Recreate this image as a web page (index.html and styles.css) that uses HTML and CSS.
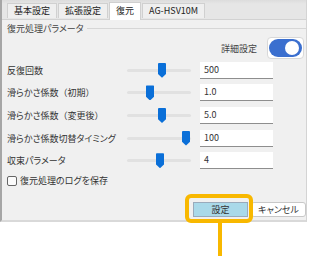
FILE: index.html
```html
<!DOCTYPE html>
<html lang="ja">
<head>
  <meta charset="UTF-8" />
  <title>復元処理パラメータ</title>
  <link rel="stylesheet" href="styles.css">
</head>
<body>
  <div class="window">
    <div class="tabs">
      <div class="tab">基本設定</div>
      <div class="tab">拡張設定</div>
      <div class="tab active">復元</div>
      <div class="tab">AG-HSV10M</div>
    </div>
    <div class="page">
      <div class="group-head">
        <span class="group-title">復元処理パラメータ</span>
        <span class="group-line"></span>
      </div>
      <div class="detail-row">
        <span class="detail-label">詳細設定</span>
        <span class="toggle"><span class="knob"></span></span>
      </div>
      <div class="param-row">
        <span class="label">反復回数</span>
        <span class="slider"><span class="thumb" style="left: 31px"></span></span>
        <span class="field">500</span>
      </div>
      <div class="param-row">
        <span class="label">滑らかさ係数<span class="paren">（</span>初期<span class="paren">）</span></span>
        <span class="slider"><span class="thumb" style="left: 19px"></span></span>
        <span class="field">1.0</span>
      </div>
      <div class="param-row">
        <span class="label">滑らかさ係数<span class="paren">（</span>変更後<span class="paren">）</span></span>
        <span class="slider"><span class="thumb" style="left: 31px"></span></span>
        <span class="field">5.0</span>
      </div>
      <div class="param-row">
        <span class="label">滑らかさ係数切替タイミング</span>
        <span class="slider"><span class="thumb" style="left: 55px"></span></span>
        <span class="field">100</span>
      </div>
      <div class="param-row">
        <span class="label">収束パラメータ</span>
        <span class="slider"><span class="thumb" style="left: 29px"></span></span>
        <span class="field">4</span>
      </div>
      <label class="check-row">
        <span class="checkbox"></span>
        <span>復元処理のログを保存</span>
      </label>
      <div class="buttons">
        <button class="btn primary">設定</button>
        <button class="btn">キャンセル</button>
      </div>
    </div>
  </div>
  <div class="highlight"></div>
  <div class="pointer"></div>
</body>
</html>
```

FILE: styles.css
```css
body {
  margin: 0;
  background: #fff;
  font-family: "Noto Sans CJK JP", "Noto Sans", sans-serif;
  font-feature-settings: "palt";
  font-size: 9px;
  color: #333;
  width: 313px;
  height: 256px;
  position: relative;
  overflow: hidden;
}
.window {
  width: 304px;
  height: 220px;
  background: #f0f0f0;
  border-left: 2px solid #a6a6a6;
  border-right: 1px solid #d4d4d4;
  border-bottom: 2px solid #d9d9d9;
}
.tabs {
  height: 19px;
  display: flex;
  align-items: flex-end;
  padding-left: 5px;
  background: linear-gradient(#dcdcdc 0, #e6e6e6 4px);
  border-bottom: 1px solid #d2d2d2;
}
.tab {
  height: 14px;
  line-height: 14px;
  padding: 0 6px;
  margin-right: 1px;
  margin-bottom: 1px;
  background: #efefef;
  border: 1px solid #d0d0d0;
  border-bottom: none;
  color: #222;
}
.tab.active {
  height: 17px;
  line-height: 16px;
  margin-bottom: -1px;
  background: #fff;
}
.page {
  padding: 0 0 0 5px;
}
.group-head {
  display: flex;
  align-items: center;
  height: 12px;
  margin-top: 2px;
}
.group-title {
  color: #444;
  padding-right: 3px;
}
.group-line {
  flex: 1;
  height: 1px;
  background: #d6d6d6;
}
.detail-row {
  display: flex;
  justify-content: flex-end;
  align-items: center;
  gap: 10px;
  height: 22px;
  margin-top: 3px;
  padding-right: 2px;
}
.detail-label {
  color: #444;
}
.toggle {
  width: 33px;
  height: 18px;
  border: 1px solid #d8d8d8;
  border-radius: 4px;
  background: #fff;
  padding: 1px;
  display: flex;
  justify-content: flex-end;
  align-items: center;
  box-sizing: content-box;
  position: relative;
}
.toggle::before {
  content: "";
  position: absolute;
  inset: 1px;
  border-radius: 9px;
  background: #3b6fcf;
}
.knob {
  position: relative;
  width: 14px;
  height: 14px;
  margin-right: 3px;
  border-radius: 50%;
  background: #fff;
}
.param-row {
  display: grid;
  grid-template-columns: 120px 64px 82px;
  align-items: center;
  height: 22.6px;
}
.label {
  color: #333;
  white-space: nowrap;
}
.paren {
  font-feature-settings: normal;
}
.slider {
  position: relative;
  height: 3px;
  border-radius: 2px;
  background: #e1e1e1;
}
.thumb {
  position: absolute;
  top: -6px;
  width: 8px;
  height: 15px;
  background: #0a6fd8;
  clip-path: polygon(0 0, 100% 0, 100% 75%, 50% 100%, 0 75%);
  border-radius: 1px;
}
.field {
  margin-left: 9px;
  height: 16px;
  line-height: 16px;
  padding-left: 4px;
  background: #fff;
  border-bottom: 1px solid #8e8e8e;
  color: #333;
}
.check-row {
  display: flex;
  align-items: center;
  gap: 3px;
  height: 18px;
}
.checkbox {
  width: 8px;
  height: 8px;
  border: 1px solid #666;
  border-radius: 2px;
  background: #fbfbfb;
}
.buttons {
  display: flex;
  justify-content: flex-end;
  gap: 3px;
  margin-top: 12px;
}
.btn {
  width: 55px;
  height: 15px;
  padding: 0;
  font: inherit;
  color: #333;
  background: #fff;
  border: 1px solid #c8c8c8;
  border-radius: 3px;
}
.btn.primary {
  background: #a9d9e9;
  border-color: #9ab;
  border-radius: 0;
}
.highlight {
  position: absolute;
  left: 185px;
  top: 194px;
  width: 60px;
  height: 21px;
  border: 4px solid #f8b800;
  border-radius: 6px;
}
.pointer {
  position: absolute;
  left: 218px;
  top: 223px;
  width: 4px;
  height: 33px;
  background: #f8b800;
}
```
